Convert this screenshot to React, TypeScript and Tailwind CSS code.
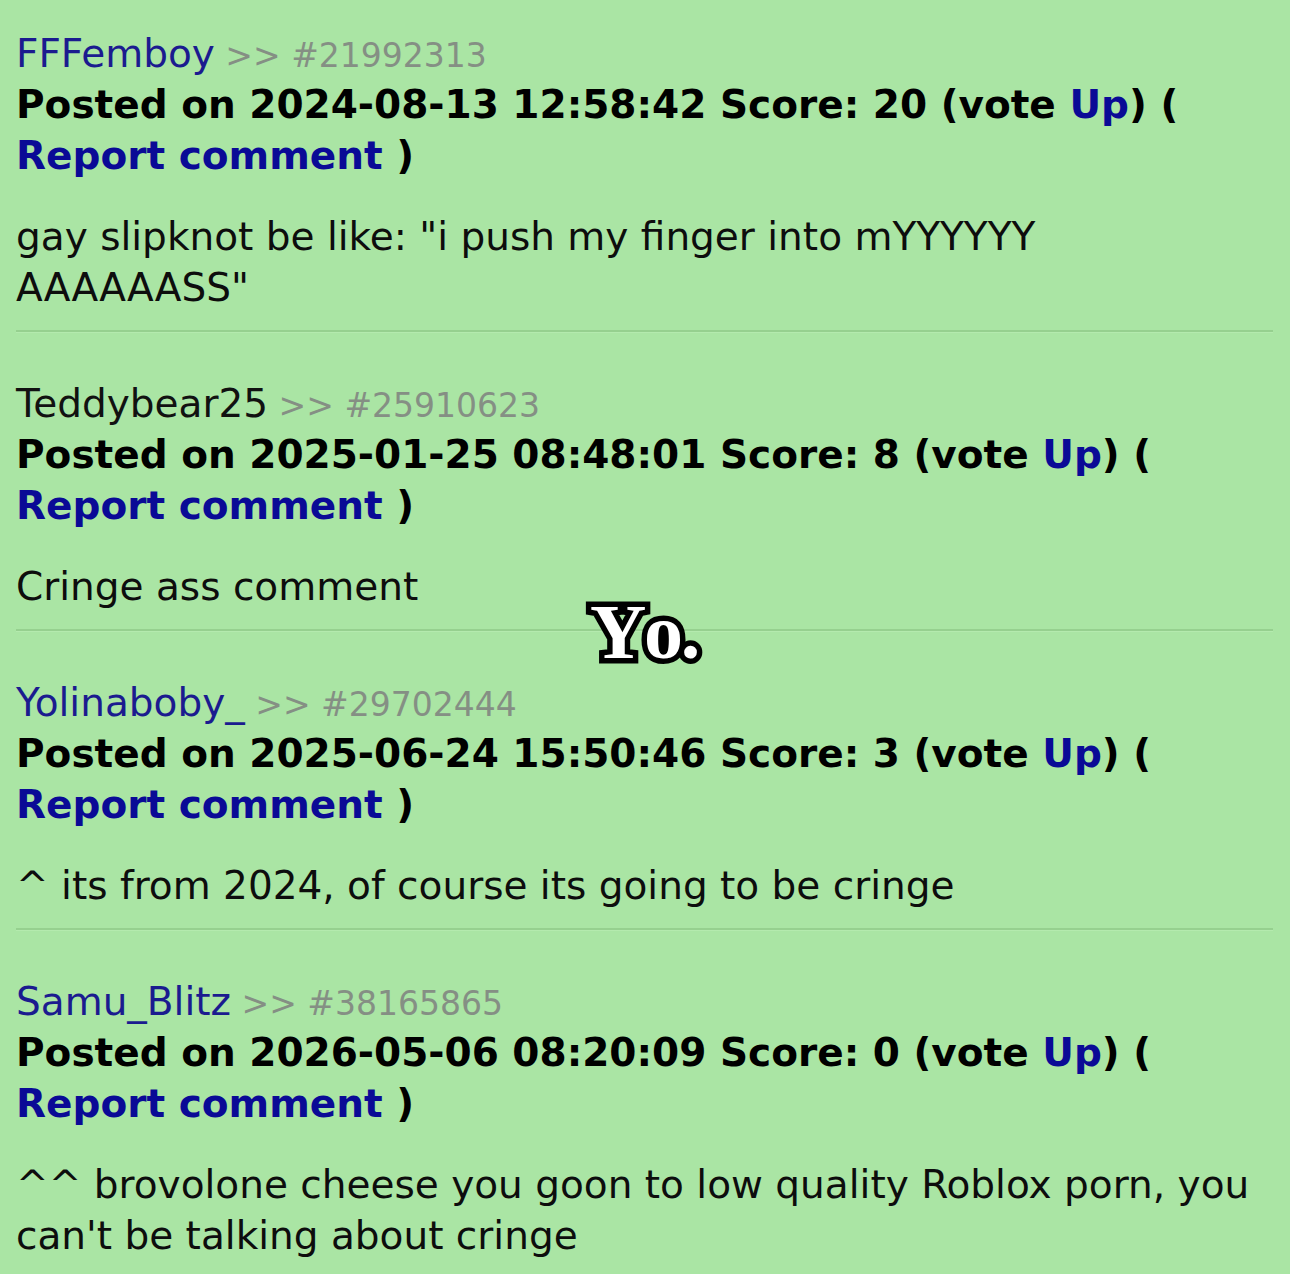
import React from "react";

type C = {
  user: string;
  link: boolean;
  id: string;
  date: string;
  score: string;
  body: string;
};

const comments: C[] = [
  {
    user: "FFFemboy",
    link: true,
    id: "#21992313",
    date: "2024-08-13 12:58:42",
    score: "20",
    body: 'gay slipknot be like: "i push my finger into mYYYYYY AAAAAASS"',
  },
  {
    user: "Teddybear25",
    link: false,
    id: "#25910623",
    date: "2025-01-25 08:48:01",
    score: "8",
    body: "Cringe ass comment",
  },
  {
    user: "Yolinaboby_",
    link: true,
    id: "#29702444",
    date: "2025-06-24 15:50:46",
    score: "3",
    body: "^ its from 2024, of course its going to be cringe",
  },
  {
    user: "Samu_Blitz",
    link: true,
    id: "#38165865",
    date: "2026-05-06 08:20:09",
    score: "0",
    body: "^^ brovolone cheese you goon to low quality Roblox porn, you can't be talking about cringe",
  },
];

export default function App() {
  return (
    <div
      className="relative min-h-[1274px] w-[1290px] bg-[#aae5a4] pl-4 pr-[17px] pt-[28px] text-[39px] leading-[51px] text-[#0d0d0d]"
      style={{ fontFamily: '"DejaVu Sans", Verdana, sans-serif' }}
    >
      {comments.map((c, i) => (
        <div key={i}>
          <div className="h-[51px]">
            <span className={c.link ? "text-[#1b1b8f]" : "text-[#111111]"}>{c.user}</span>
            <span className="text-[33px] leading-none text-[#858f84]"> &gt;&gt; {c.id}</span>
          </div>
          <div className="font-bold text-black">
            Posted on {c.date} Score: {c.score} (vote{" "}
            <span className="text-[#0a0a96]">Up</span>) ({" "}
            <span className="text-[#0a0a96]">Report comment</span> )
          </div>
          <div className="mt-[30px] pr-[20px]">{c.body}</div>
          {i < comments.length - 1 && (
            <div className="mb-[46px] mt-[17px] h-[2px] bg-[#96d08f] shadow-[0_1px_0_#b4eaae]" />
          )}
        </div>
      ))}
      <div
        className="absolute left-[590px] top-[593px] text-[78px] font-bold leading-none tracking-[-0.03em] text-white [font-kerning:none] [-webkit-text-stroke:11px_black] [paint-order:stroke_fill]"
        style={{ fontFamily: '"Liberation Serif", "DejaVu Serif", serif' }}
      >
        Yo.
      </div>
    </div>
  );
}
